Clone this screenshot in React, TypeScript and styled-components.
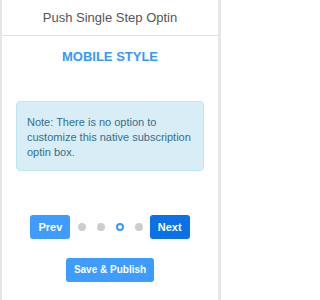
import React from 'react';
import styled, { createGlobalStyle } from 'styled-components';

const GlobalStyle = createGlobalStyle`
  html, body {
    margin: 0;
    padding: 0;
    background: #ffffff;
  }
  body {
    font-family: "Liberation Sans", Arial, sans-serif;
  }
  * {
    box-sizing: border-box;
  }
`;

const Frame = styled.div`
  width: 221px;
  min-height: 300px;
  border-left: 2px solid #e6e6e6;
  border-right: 3px solid #e6e6e6;
  background: #fff;
`;

const Header = styled.div`
  padding: 10px 0;
  border-bottom: 1px solid #e3e3e3;
  text-align: center;
  color: #555555;
  font-size: 13px;
  line-height: 15px;
`;

const Body = styled.div`
  padding: 13px 14px 0;
  display: flex;
  flex-direction: column;
  align-items: center;
`;

const StyleTitle = styled.h4`
  margin: 0;
  color: #3399ff;
  font-size: 13px;
  line-height: 15px;
  font-weight: 700;
  text-align: center;
`;

const Note = styled.div`
  align-self: stretch;
  margin-top: 37px;
  padding: 13px 10px 10px;
  background: #d9edf7;
  border: 1px solid #bce8f1;
  border-radius: 4px;
  color: #31708f;
  font-size: 11px;
  line-height: 15px;
`;

const Pager = styled.div`
  margin-top: 44px;
  display: flex;
  align-items: center;
`;

const Button = styled.button<{ $dark?: boolean; $small?: boolean }>`
  border: none;
  border-radius: 3px;
  padding: 5px 8px;
  background: ${p => (p.$dark ? '#0a72e6' : '#3d9cfd')};
  color: #ffffff;
  font-family: "Liberation Sans", Arial, sans-serif;
  font-size: ${p => (p.$small ? '10px' : '11px')};
  line-height: 14px;
  font-weight: 700;
  cursor: pointer;
`;

const Dots = styled.div`
  display: flex;
  align-items: center;
  gap: 11px;
  margin: 0 7px 0 7.5px;
`;

const Dot = styled.span<{ $active?: boolean }>`
  width: 8px;
  height: 8px;
  border-radius: 50%;
  background: ${p => (p.$active ? '#ffffff' : '#cccccc')};
  border: ${p => (p.$active ? '2px solid #3399ff' : 'none')};
`;

const SaveRow = styled.div`
  margin-top: 19px;
  display: flex;
  justify-content: center;
`;

export default function App() {
  const steps = [false, false, true, false];
  return (
    <>
      <GlobalStyle />
      <Frame>
        <Header>Push Single Step Optin</Header>
        <Body>
          <StyleTitle>MOBILE STYLE</StyleTitle>
          <Note>
            Note: There is no option to customize this native subscription optin box.
          </Note>
          <Pager>
            <Button>Prev</Button>
            <Dots>
              {steps.map((active, i) => (
                <Dot key={i} $active={active} />
              ))}
            </Dots>
            <Button $dark>Next</Button>
          </Pager>
          <SaveRow>
            <Button $small>Save &amp; Publish</Button>
          </SaveRow>
        </Body>
      </Frame>
    </>
  );
}
